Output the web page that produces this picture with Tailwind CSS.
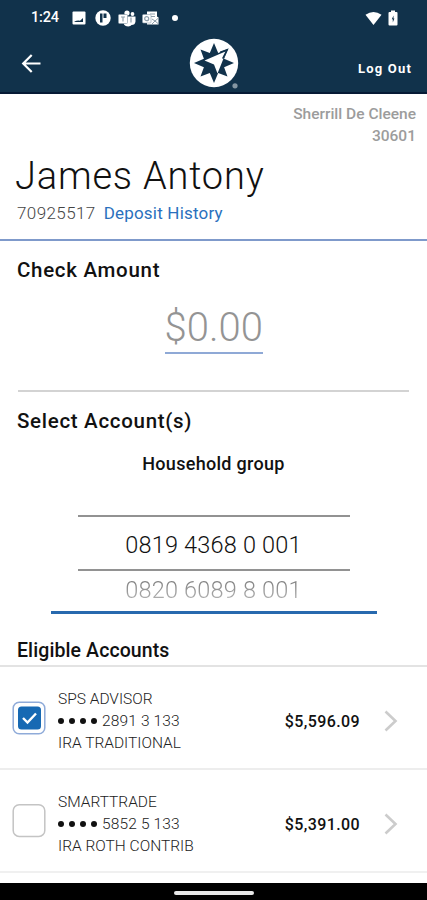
<!DOCTYPE html>
<html lang="en">
<head>
<meta charset="utf-8">
<meta name="viewport" content="width=device-width, initial-scale=1">
<title>Deposit</title>
<script src="https://cdn.jsdelivr.net/npm/@tailwindcss/browser@4"></script>
</head>
<body class="bg-white">
<div class="w-[427px] h-[900px] flex flex-col overflow-hidden bg-white text-[#111] font-['Roboto',sans-serif] whitespace-nowrap">
  <header class="h-[94px] shrink-0 bg-[#11324b] border-b-2 border-[#061a35] text-white">
    <div class="h-[36px] flex items-center pl-[31px] pr-[29px]">
      <span class="w-[41px] text-[14.5px] leading-[36px] font-medium tracking-[-0.2px]">1:24</span>
      <svg class="w-[14px] h-[14px]" viewBox="0 0 14 14"><rect x="0.5" y="0.5" width="13" height="13" rx="1" fill="#fff"/><path d="M2.500 10.500q3-1.500 5.500-.8l3-2.700v4h-8.500z" fill="#11324b"/></svg>
      <svg class="w-[16px] h-[16px] ml-[9px]" viewBox="0 0 16 16"><circle cx="8" cy="8" r="7.700" fill="#fff"/><path d="M5 3.500h2.500v9H5zM8.500 3.500h3v4.500h-3z" fill="#11324b"/></svg>
      <svg class="w-[18px] h-[17px] ml-[7px]" viewBox="0 0 18 17"><circle cx="9" cy="3" r="2.600" fill="#fff"/><circle cx="14.500" cy="4" r="1.900" fill="#fff"/><path d="M5 6.500h12.500v5a4 4 0 0 1-4 3.500c-1 2-6 2-7.500-.5z" fill="#fff"/><rect x="0.500" y="4.500" width="9" height="9" rx="1" fill="#fff" stroke="#8fa0ac" stroke-width=".7"/><path d="M3 7h4M5 7v4.500M13 7.500v5" stroke="#8fa0ac" stroke-width="1.200"/></svg>
      <svg class="w-[17px] h-[16px] ml-[6px]" viewBox="0 0 17 16"><path d="M5 1.500h10v5l1.500 1v7H5z" fill="#fff"/><path d="M8 4h5M9 6.500h4M10 9l3 2 3.500-3M10 14l3-3 3 2.500" stroke="#8fa0ac" fill="none"/><rect x="0.500" y="4.500" width="8.500" height="8.500" rx="1" fill="#fff" stroke="#8fa0ac" stroke-width=".6"/><circle cx="4.700" cy="8.700" r="2" fill="none" stroke="#8fa0ac" stroke-width="1.200"/></svg>
      <span class="w-[6px] h-[6px] rounded-full bg-white ml-[13px]"></span>
      <svg class="w-[17px] h-[15px] ml-auto" viewBox="0 0 18 15"><path d="M.5 3.500Q9-2.500 17.500 3.500L9 14.500z" fill="#fff"/></svg>
      <svg class="w-[10px] h-[16px] ml-[6px]" viewBox="0 0 10 16"><path d="M3 .5h4V2h1.500q1 0 1 1v11.500q0 1-1 1h-7q-1 0-1-1V3q0-1 1-1H3z" fill="#fff"/><path d="M5.500 5.500L3.800 9.300h1V12.500L6.400 8.500H5.500z" fill="#11324b"/></svg>
    </div>
    <div class="h-[56px] grid grid-cols-3 pl-[21px] pr-[15px]">
      <svg class="w-[20px] h-[20px] mt-[17px]" viewBox="0 0 20 20" fill="none" stroke="#fff" stroke-width="2.200"><path d="M19.500 10.500H2.500M10.700 2L2.200 10.500l8.500 8.500"/></svg>
      <div class="justify-self-center mt-[2px] w-[50px] relative left-[-2px]">
        <svg class="w-[50px] h-[52px]" viewBox="0 0 50 52"><circle cx="25" cy="25" r="24.200" fill="#fff"/><path d="M25 5L29.200 14.900L39.500 10.500L35.100 20.800L45 25L35.100 29.200L38.500 38.500L29.200 35.100L25 45L20.800 35.100L11.500 38.500L14.900 29.200L5 25L14.900 20.800L11.500 11.500L20.800 14.900Z" fill="#11324b"/><path d="M37.500 13L15.500 22.500l9.500 4 3.500 9z" fill="#fff"/><path d="M39.500 10.500L31 13.500v1.200l5.500-1.500-3.500 7 1.500.800z" fill="#11324b"/><circle cx="46" cy="47.800" r="2.600" fill="#8496a3"/></svg>
      </div>
      <span class="justify-self-end mt-[23px] text-[13px] leading-[20px] font-bold tracking-[1.2px]">Log Out</span>
    </div>
  </header>

  <section class="h-[147px] shrink-0 border-b-2 border-[#7f9acb]">
    <div class="h-[52px] pt-[9px] pr-[11px] text-right text-[15.5px] leading-[22px] font-medium text-[#9c9c9c]">
      <p>Sherrill De Cleene</p>
      <p>30601</p>
    </div>
    <h1 class="pl-[15px] h-[58px] leading-[60px] text-[38px] font-[350] tracking-[0.8px]">James Antony</h1>
    <div class="pl-[17px] mt-[-2px] h-[22px] leading-[22px] text-[17px] font-[350] flex gap-[8px]">
      <span class="tracking-[0.4px] text-[#444]">70925517</span>
      <a class="font-normal text-[#2a70bd] tracking-[0.2px]">Deposit History</a>
    </div>
  </section>

  <section class="h-[151px] shrink-0 mx-[18px] border-b-2 border-[#d3d3d3] flex flex-col items-center">
    <h2 class="self-start ml-[-1px] mt-[17px] h-[24px] leading-[24px] text-[20.5px] font-medium tracking-[0.7px]">Check Amount</h2>
    <div class="w-[98px] mt-[18px] h-[54px] border-b-2 border-[#8fa9d6] text-center text-[40px] leading-[56px] font-[350] text-[#949494]">$0.00</div>
  </section>

  <section class="h-[222px] shrink-0 flex flex-col items-center">
    <h2 class="self-start ml-[17px] mt-[17px] h-[24px] leading-[24px] text-[20.5px] font-medium tracking-[0.7px]">Select Account(s)</h2>
    <h3 class="mt-[19px] h-[25px] leading-[24px] text-[18px] font-medium tracking-[0.3px]">Household group</h3>
    <div class="mt-[38px] w-[326px] h-[99px] border-b-[3px] border-[#2769ae] flex flex-col items-center">
      <div class="w-[272px] h-[56px] border-y-2 border-[#929292] text-center leading-[57px] text-[23.5px] font-[350] tracking-[0.2px]">0819 4368 0 001</div>
      <div class="h-[38px] leading-[38px] text-[23.5px] font-[350] tracking-[0.2px] text-transparent bg-clip-text bg-linear-to-b from-[#666] to-[#ccc]">0820 6089 8 001</div>
    </div>
  </section>

  <section class="shrink-0">
    <h2 class="pl-[17px] h-[53px] pt-[24px] leading-[25px] text-[19.5px] font-medium tracking-[0.1px] border-b-2 border-[#e3e3e3]">Eligible Accounts</h2>
    <div class="h-[103px] pl-[12px] pr-[29px] flex items-center border-b-2 border-[#ededed]">
      <svg class="w-[34px] h-[34px]" viewBox="0 0 34 34"><rect x="1.200" y="1.200" width="31.600" height="31.600" rx="6" fill="#fff" stroke="#8fabd9" stroke-width="1.500"/><rect x="6" y="5.500" width="23" height="23" rx="3.500" fill="#1769b3"/><path d="M11 17l4.500 4.500 8.500-9" fill="none" stroke="#fff" stroke-width="2.400"/></svg>
      <div class="ml-[12px] mt-[6px] leading-[22px] text-[15.5px] font-light text-[#222]">
        <p>SPS ADVISOR</p>
        <p class="flex items-center tracking-[0.15px]"><span class="flex gap-[5px] mr-[5px]"><i class="size-[6px] rounded-full bg-[#111]"></i><i class="size-[6px] rounded-full bg-[#111]"></i><i class="size-[6px] rounded-full bg-[#111]"></i><i class="size-[6px] rounded-full bg-[#111]"></i></span>2891 3 133</p>
        <p>IRA TRADITIONAL</p>
      </div>
      <span class="ml-auto mt-[8px] text-[16px] leading-[22px] font-medium tracking-[0.4px]">$5,596.09</span>
      <svg class="w-[14px] h-[22px] mt-[6px] ml-[24px]" viewBox="0 0 14 22" fill="none" stroke="#ccc" stroke-width="2.600"><path d="M1.500 1.500L11.500 11l-10 9.500"/></svg>
    </div>
    <div class="h-[103px] pl-[12px] pr-[29px] flex items-center border-b-2 border-[#f0f0f0]">
      <svg class="w-[34px] h-[34px]" viewBox="0 0 34 34"><rect x="1.200" y="0.800" width="31.600" height="31.600" rx="6" fill="#fff" stroke="#c4c4c4" stroke-width="1.500"/></svg>
      <div class="ml-[12px] mt-[6px] leading-[22px] text-[15.5px] font-light text-[#222]">
        <p>SMARTTRADE</p>
        <p class="flex items-center tracking-[0.15px]"><span class="flex gap-[5px] mr-[5px]"><i class="size-[6px] rounded-full bg-[#111]"></i><i class="size-[6px] rounded-full bg-[#111]"></i><i class="size-[6px] rounded-full bg-[#111]"></i><i class="size-[6px] rounded-full bg-[#111]"></i></span>5852 5 133</p>
        <p>IRA ROTH CONTRIB</p>
      </div>
      <span class="ml-auto mt-[8px] text-[16px] leading-[22px] font-medium tracking-[0.4px]">$5,391.00</span>
      <svg class="w-[14px] h-[22px] mt-[6px] ml-[24px]" viewBox="0 0 14 22" fill="none" stroke="#ccc" stroke-width="2.600"><path d="M1.500 1.500L11.500 11l-10 9.500"/></svg>
    </div>
  </section>

  <footer class="mt-auto h-[17px] shrink-0 bg-black flex justify-center items-center">
    <div class="w-[80px] h-[4px] mt-[2px] rounded-full bg-[#e8e8e8]"></div>
  </footer>
</div>
</body>
</html>
